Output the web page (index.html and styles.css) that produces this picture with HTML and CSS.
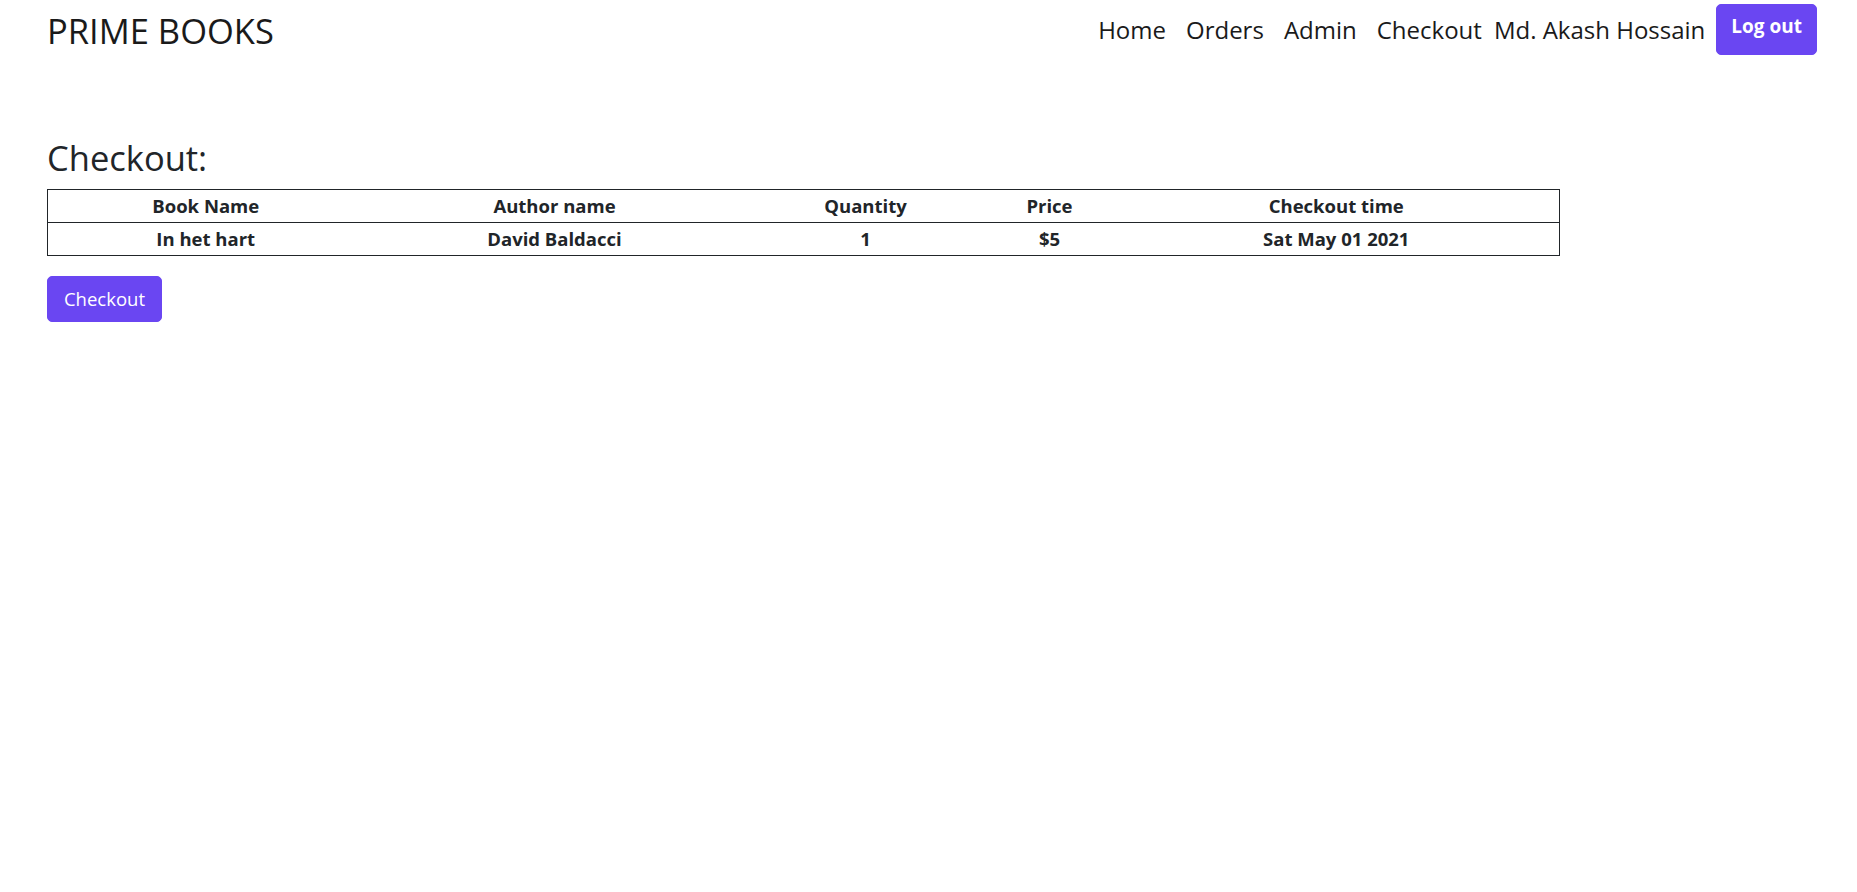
FILE: index.html
```html
<!DOCTYPE html>
<html lang="en">
<head>
<meta charset="utf-8">
<title>Prime Books - Checkout</title>
<link rel="stylesheet" href="styles.css">
</head>
<body>
<header class="topbar">
  <a class="brand" href="#">PRIME BOOKS</a>
  <nav class="nav">
    <a class="nav-link" href="#">Home</a>
    <a class="nav-link" href="#">Orders</a>
    <a class="nav-link" href="#">Admin</a>
    <a class="nav-link" href="#">Checkout</a>
    <span class="user-name">Md. Akash Hossain</span>
    <button class="btn btn-logout">Log out</button>
  </nav>
</header>
<main class="content">
  <h3 class="page-title">Checkout:</h3>
  <table class="checkout-table">
    <colgroup>
      <col class="c1"><col class="c2"><col class="c3"><col class="c4"><col class="c5">
    </colgroup>
    <thead>
      <tr><th>Book Name</th><th>Author name</th><th>Quantity</th><th>Price</th><th>Checkout time</th></tr>
    </thead>
    <tbody>
      <tr><td>In het hart</td><td>David Baldacci</td><td>1</td><td>$5</td><td>Sat May 01 2021</td></tr>
    </tbody>
  </table>
  <button class="btn btn-checkout">Checkout</button>
</main>
</body>
</html>
```
FILE: styles.css
```css
* { box-sizing: border-box; }
html, body { margin: 0; padding: 0; background: #fff; }
body {
  font-family: "Open Sans", "Noto Sans", sans-serif;
  color: #212529;
  width: 1857px;
  height: 892px;
}
.topbar {
  display: flex;
  justify-content: space-between;
  align-items: flex-start;
  padding: 4px 40px 0 47px;
}
.brand {
  font-size: 34.5px;
  font-weight: 500;
  line-height: 42px;
  margin-top: 6px;
  color: #1a1a1a;
  text-decoration: none;
}
.nav {
  display: flex;
  align-items: flex-start;
}
.nav-link {
  font-size: 24px;
  font-weight: 500;
  line-height: 34px;
  margin-top: 9px;
  padding: 0 10px;
  color: #1a1a1a;
  text-decoration: none;
}
.user-name {
  font-size: 24px;
  font-weight: 500;
  line-height: 34px;
  margin-top: 9px;
  padding-left: 2px;
  color: #1a1a1a;
}
.btn {
  font-family: inherit;
  border: 1px solid #6a46f2;
  background: #6a46f2;
  color: #fff;
  border-radius: 5px;
  cursor: pointer;
}
.btn-logout {
  margin-left: 11px;
  height: 51px;
  padding: 6px 14px 0;
  font-size: 19px;
  font-weight: 700;
  line-height: 30px;
  align-self: flex-start;
  display: flex;
  align-items: flex-start;
}
.content {
  padding: 0 298px 0 47px;
}
.page-title {
  font-size: 34.5px;
  font-weight: 500;
  line-height: 42px;
  margin: 82px 0 10px;
}
.checkout-table {
  width: 1512px;
  border-collapse: collapse;
  border: 1px solid #212529;
  table-layout: fixed;
  font-size: 18.5px;
  font-weight: 700;
}
.checkout-table .c1 { width: 316px; }
.checkout-table .c2 { width: 382px; }
.checkout-table .c3 { width: 240px; }
.checkout-table .c4 { width: 128px; }
.checkout-table .c5 { width: 446px; }
.checkout-table th,
.checkout-table td {
  text-align: center;
  padding: 1px 0;
  line-height: 30px;
  font-weight: 700;
}
.checkout-table thead tr { border-bottom: 1px solid #212529; }
.btn-checkout {
  margin-top: 20px;
  height: 46px;
  width: 115px;
  padding: 0;
  font-size: 18.5px;
  line-height: 30px;
}
```
